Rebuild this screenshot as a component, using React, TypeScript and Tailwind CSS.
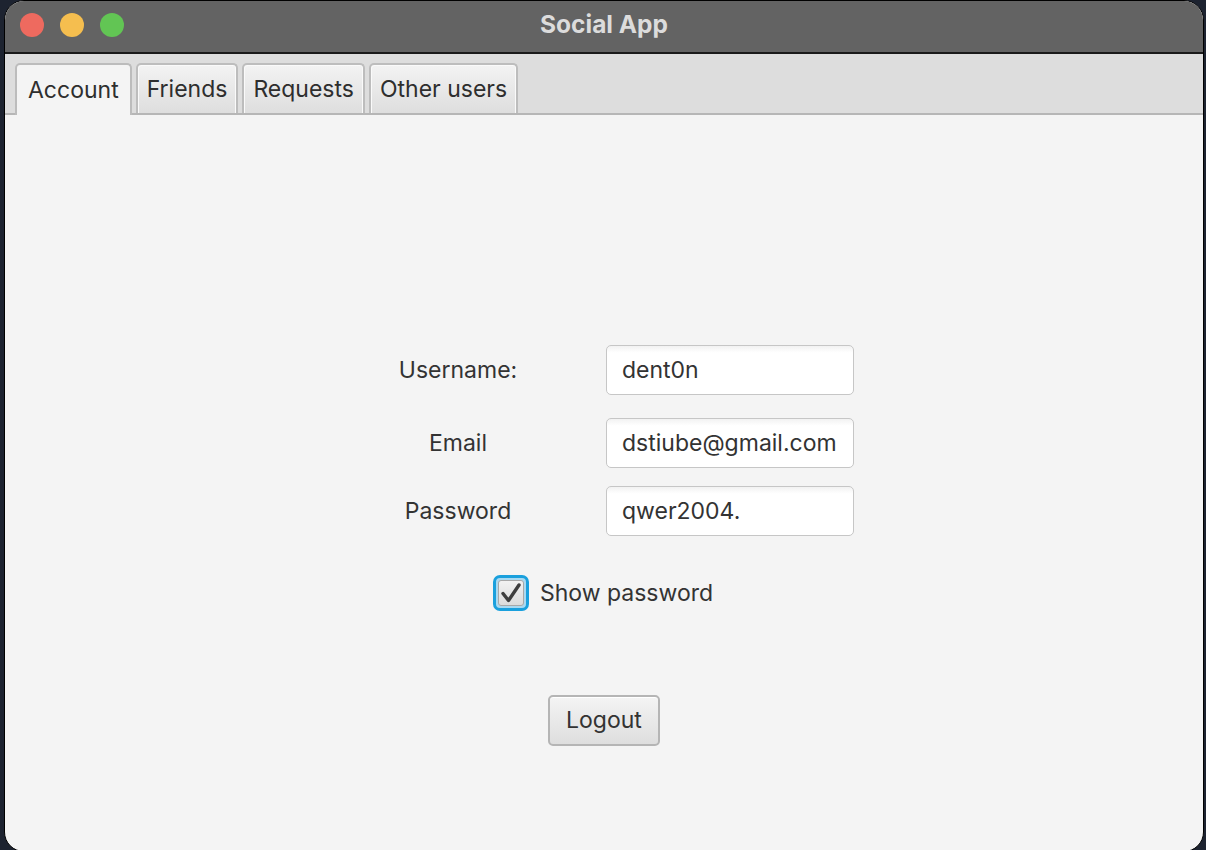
import React from "react"

const tabs = ["Account", "Friends", "Requests", "Other users"]

function Field({ value }: { value: string }) {
  return (
    <div className="flex h-[50px] w-[248px] items-center rounded-[5px] border border-[#c6c6c6] bg-white bg-gradient-to-b from-[#f2f2f2] from-0% to-white to-[14%] px-[15px] text-[23px] text-[#333333]">
      {value}
    </div>
  )
}

export default function App() {
  return (
    <div
      className="h-[850px] w-[1206px] overflow-hidden bg-[#1d2330] pl-[4px] pr-[2px]"
      style={{ fontFamily: "Inter, 'Noto Sans', sans-serif" }}
    >
      <div className="flex h-[852px] flex-col overflow-hidden rounded-t-[20px] rounded-b-[20px] border border-black bg-[#f4f4f4]">
        {/* title bar */}
        <div className="relative flex h-[53px] shrink-0 items-center justify-center border-b-2 border-[#1a1a1a] bg-[#636363] pb-[5px]">
          <div className="absolute left-[15px] top-[12px] flex gap-[16px]">
            <span className="h-[24px] w-[24px] rounded-full bg-[#ee6a5f]" />
            <span className="h-[24px] w-[24px] rounded-full bg-[#f5be4f]" />
            <span className="h-[24px] w-[24px] rounded-full bg-[#62c554]" />
          </div>
          <span className="text-[24.5px] font-bold text-[#dcdcdc]">Social App</span>
        </div>

        {/* tab bar */}
        <div className="flex h-[61px] shrink-0 items-end gap-[4px] border-b-2 border-[#b6b6b6] bg-[#dddddd] pl-[10px]">
          {tabs.map((t, i) =>
            i === 0 ? (
              <div
                key={t}
                className="-mb-[2px] flex h-[52px] items-center rounded-t-[5px] border-x-2 border-t-2 border-[#bcbcbc] bg-[#f4f4f4] px-[11px] pt-[1px] text-[23px] text-[#2e2e2e]"
              >
                {t}
              </div>
            ) : (
              <div
                key={t}
                className="flex h-[50px] items-center rounded-t-[5px] border-x-2 border-t-2 border-[#bdbdbd] bg-gradient-to-b from-[#f3f3f3] to-[#dedede] px-[9px] text-[23px] text-[#2e2e2e] shadow-[inset_1px_1px_0_#fafafa,inset_-1px_0_0_#fafafa]"
              >
                {t}
              </div>
            )
          )}
        </div>

        {/* content */}
        <div className="flex flex-1 flex-col">
          <div className="ml-[375px] mt-[230px] grid grid-cols-[156px_248px] items-center gap-x-[70px]">
            <div className="text-center text-[23px] text-[#333333]">Username:</div>
            <Field value="dent0n" />
            <div className="mt-[23px] text-center text-[23px] text-[#333333]">Email</div>
            <div className="mt-[23px]">
              <Field value="dstiube@gmail.com" />
            </div>
            <div className="mt-[18px] text-center text-[23px] text-[#333333]">Password</div>
            <div className="mt-[18px]">
              <Field value="qwer2004." />
            </div>
          </div>

          <div className="mt-[39px] flex items-center justify-center gap-[11px] pr-[2px]">
            <div className="flex h-[36px] w-[36px] items-center justify-center rounded-[7px] border-[3px] border-[#1aa0dd] bg-[#a9d9f1]">
              <div className="flex h-[26px] w-[26px] items-center justify-center rounded-[3px] border border-[#a8a8a8] bg-gradient-to-b from-[#f2f2f2] to-[#dcdcdc]">
                <svg width="22" height="22" viewBox="0 0 22 22">
                  <path d="M3 11.5 L8.5 18.5 L19 3" fill="none" stroke="#3e3e3e" strokeWidth="3.4" strokeLinecap="round" strokeLinejoin="round" />
                </svg>
              </div>
            </div>
            <span className="text-[23px] text-[#333333]">Show password</span>
          </div>

          <div className="mt-[84px] flex justify-center">
            <button className="flex h-[51px] w-[112px] items-center justify-center rounded-[5px] border-2 border-[#b5b5b5] bg-gradient-to-b from-[#f4f4f4] to-[#dedede] text-[23px] text-[#333333] shadow-[inset_0_1px_0_#ffffff]">
              Logout
            </button>
          </div>
        </div>
      </div>
    </div>
  )
}
